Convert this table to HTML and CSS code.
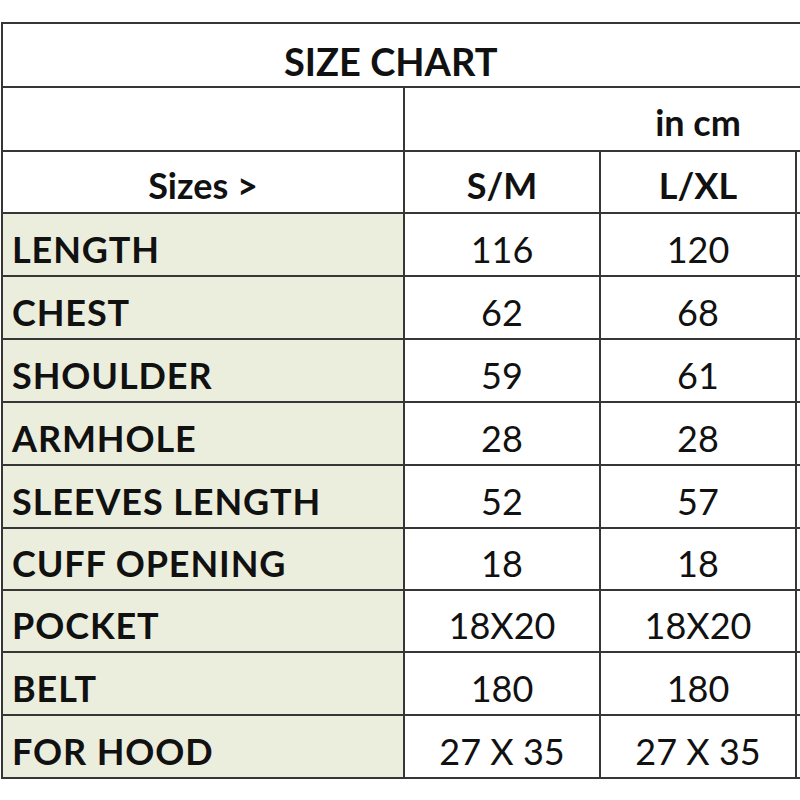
FILE: index.html
```html
<!DOCTYPE html>
<html>
<head>
<meta charset="utf-8">
<link rel="stylesheet" href="styles.css">
</head>
<body>
<div class="page">
  <table class="chart">
    <colgroup>
      <col class="c-label">
      <col class="c-size">
      <col class="c-size">
      <col class="c-size">
    </colgroup>
    <tr class="r-title"><td colspan="4" class="title">SIZE CHART</td></tr>
    <tr class="r-unit"><td></td><td colspan="3" class="unit">in cm</td></tr>
    <tr class="r-head"><td class="head">Sizes &gt;</td><td class="head">S/M</td><td class="head">L/XL</td><td></td></tr>
    <tr class="r"><td class="label">LENGTH</td><td class="val">116</td><td class="val">120</td><td></td></tr>
    <tr class="r"><td class="label">CHEST</td><td class="val">62</td><td class="val">68</td><td></td></tr>
    <tr class="r"><td class="label">SHOULDER</td><td class="val">59</td><td class="val">61</td><td></td></tr>
    <tr class="r"><td class="label">ARMHOLE</td><td class="val">28</td><td class="val">28</td><td></td></tr>
    <tr class="r"><td class="label">SLEEVES LENGTH</td><td class="val">52</td><td class="val">57</td><td></td></tr>
    <tr class="r r-short"><td class="label">CUFF OPENING</td><td class="val">18</td><td class="val">18</td><td></td></tr>
    <tr class="r r-short"><td class="label">POCKET</td><td class="val">18X20</td><td class="val">18X20</td><td></td></tr>
    <tr class="r"><td class="label">BELT</td><td class="val">180</td><td class="val">180</td><td></td></tr>
    <tr class="r"><td class="label">FOR HOOD</td><td class="val">27 X 35</td><td class="val">27 X 35</td><td></td></tr>
  </table>
</div>
</body>
</html>
```

FILE: styles.css
```css
html, body {
  margin: 0;
  padding: 0;
  background: #ffffff;
  overflow: hidden;
}

.page {
  width: 800px;
  height: 800px;
  overflow: hidden;
  padding-top: 22px;
  padding-left: 1px;
  box-sizing: border-box;
}

.chart {
  border-collapse: collapse;
  table-layout: fixed;
  width: 986px;
  font-family: Lato, "Open Sans", "Liberation Sans", sans-serif;
  color: #111111;
}

.c-label { width: 402px; }
.c-size { width: 196px; }

.chart td {
  border: 2px solid #363636;
  padding: 0;
  white-space: nowrap;
  overflow: hidden;
}

.r-title { height: 64px; }
.r-unit { height: 64px; }
.r-head { height: 62px; }
.r { height: 63px; }
.r-short { height: 62px; }

.title {
  font-weight: 700;
  font-size: 38px;
  text-align: left;
  padding-left: 281px !important;
  padding-top: 12px !important;
}

.unit {
  font-weight: 700;
  font-size: 36px;
  text-align: center;
  vertical-align: bottom;
  padding-bottom: 6px !important;
}

.head {
  font-weight: 700;
  font-size: 36px;
  text-align: center;
  padding-top: 6px !important;
}

.label {
  font-weight: 700;
  font-size: 36px;
  letter-spacing: 0.9px;
  text-align: left;
  padding-left: 9px !important;
  padding-top: 8px !important;
  background: #eceedd;
}

.val {
  font-weight: 400;
  font-size: 36px;
  text-align: center;
  padding-top: 8px !important;
}
```
